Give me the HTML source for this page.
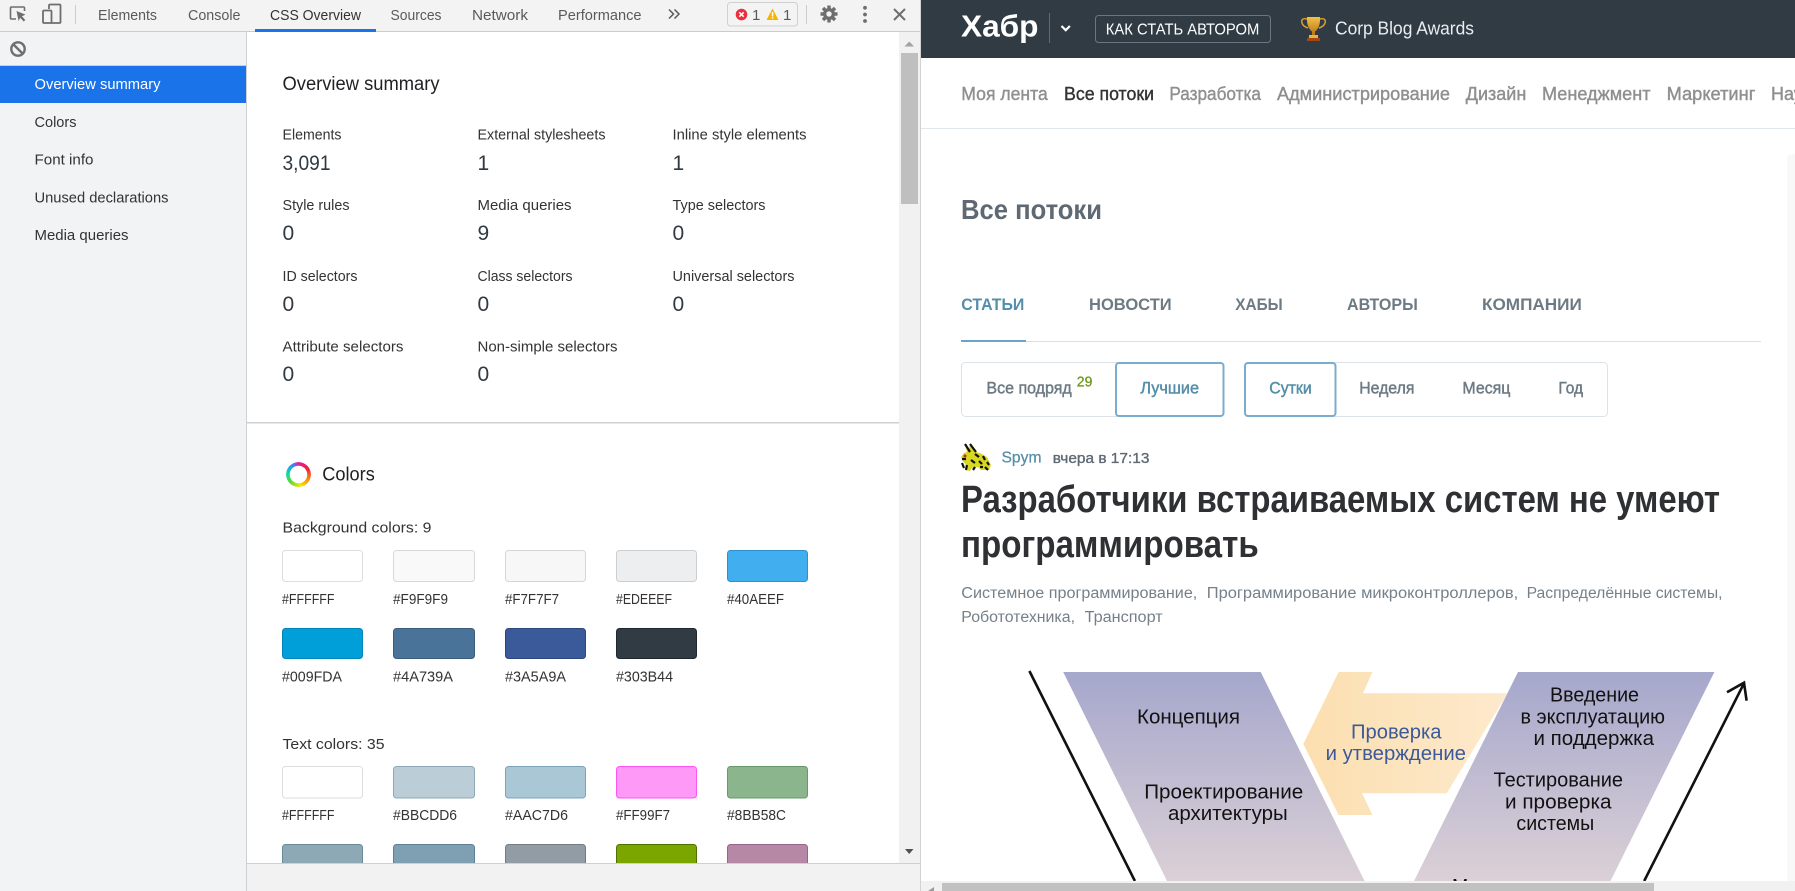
<!DOCTYPE html>
<html lang="ru"><head><meta charset="utf-8"><title>CSS Overview</title>
<style>
html,body{margin:0;padding:0;width:1795px;height:891px;overflow:hidden;background:#fff}
svg{position:absolute;left:0;top:0;display:block}
text{font-family:"Liberation Sans",Arial,sans-serif}
.tab{font-size:15px;fill:#5a5a5a}
.side{font-size:15px;fill:#333}
.lab{font-size:15px;fill:#333}
.val{font-size:21px;fill:#303942}
.h{font-size:19px;fill:#202124}
.hex{font-size:15px;fill:#333}
.nav{font-size:18.5px;fill:#8f8f8f;stroke:#8f8f8f;stroke-width:.4}
.tb{font-size:16.5px;font-weight:bold;fill:#6c7a84}
.fl{font-size:17px;fill:#6c7a84;stroke:#6c7a84;stroke-width:.45}
.hub{font-size:15.500px;fill:#75808a}
.d{font-size:20.500px;fill:#111}
#ring{position:absolute;left:286px;top:461.5px;width:25px;height:25px;border-radius:50%;
background:conic-gradient(#e81f8f 0deg,#f0203a 60deg,#f98a10 115deg,#f5e800 170deg,#5fdd25 225deg,#10d8a0 275deg,#1ea0f0 320deg,#8a4fe0 345deg,#e81f8f 360deg);
-webkit-mask:radial-gradient(circle,transparent 8.5px,#000 9px);mask:radial-gradient(circle,transparent 8.5px,#000 9px)}
</style></head><body>
<svg width="1795" height="891" viewBox="0 0 1795 891" xmlns="http://www.w3.org/2000/svg">
<defs>
<linearGradient id="pg" x1="0" y1="0" x2="0" y2="1"><stop offset="0" stop-color="#a5a7cc"/><stop offset="1" stop-color="#dbd0d6"/></linearGradient>
<linearGradient id="ar" x1="0" y1="0" x2="1" y2="0"><stop offset="0" stop-color="#fcdfb0"/><stop offset="1" stop-color="#fde9cc"/></linearGradient>
<linearGradient id="gold" x1="0" y1="0" x2="0" y2="1"><stop offset="0" stop-color="#f2c14a"/><stop offset="1" stop-color="#b8740f"/></linearGradient>
<clipPath id="pageclip"><rect x="921" y="0" width="874" height="881"/></clipPath>
<clipPath id="devclip"><rect x="247" y="32" width="652" height="831"/></clipPath>
</defs>

<!-- DevTools toolbar -->
<rect x="0" y="0" width="920" height="31" fill="#f3f3f3"/>
<rect x="0" y="31" width="920" height="1" fill="#cbcbcb"/>
<g fill="none" stroke="#6e6e6e" stroke-width="1.6">
<path d="M16 19h-4.5a1 1 0 0 1-1-1V8a1 1 0 0 1 1-1h12a1 1 0 0 1 1 1v3"/>
</g>
<path d="M16.5 11l9 3.6-3.6 1.6 3.4 3.8-1.6 1.500-3.5-3.8-1.6 3.3z" fill="#6e6e6e"/>
<g fill="none" stroke="#6e6e6e" stroke-width="1.8">
<path d="M49 9V5.500a1 1 0 0 1 1-1h9.500a1 1 0 0 1 1 1v16.500a1 1 0 0 1-1 1H44a1 1 0 0 1-1-1V11.500a1 1 0 0 1 1-1h6.500a1 1 0 0 1 1 1V23"/>
</g>
<rect x="75" y="5" width="1" height="19" fill="#ccc"/>
<text class="tab" x="98" y="20" textLength="59" lengthAdjust="spacingAndGlyphs">Elements</text>
<text class="tab" x="188" y="20" textLength="52.500" lengthAdjust="spacingAndGlyphs">Console</text>
<text class="tab" x="270" y="20" textLength="91" lengthAdjust="spacingAndGlyphs" style="fill:#333">CSS Overview</text>
<rect x="255" y="29" width="121" height="3" fill="#1a73e8"/>
<text class="tab" x="390.500" y="20" textLength="51" lengthAdjust="spacingAndGlyphs">Sources</text>
<text class="tab" x="472" y="20" textLength="56" lengthAdjust="spacingAndGlyphs">Network</text>
<text class="tab" x="558" y="20" textLength="83.500" lengthAdjust="spacingAndGlyphs">Performance</text>
<path d="M669 9.500l4.500 4.500-4.500 4.500M674.500 9.500l4.500 4.500-4.500 4.500" fill="none" stroke="#5a5a5a" stroke-width="1.500"/>
<rect x="727.500" y="2.500" width="70" height="23.500" rx="3" fill="#f3f3f3" stroke="#d0d0d0"/>
<circle cx="741.500" cy="14.500" r="5.800" fill="#e9303f"/>
<path d="M739.300 12.300l4.400 4.400M743.700 12.300l-4.400 4.400" stroke="#fff" stroke-width="1.500"/>
<text x="752" y="20" font-size="15" fill="#5a5a5a">1</text>
<path d="M772.500 8.500l6 11.500h-12z" fill="#f4b400"/><rect x="771.800" y="12" width="1.500" height="4.500" fill="#fff"/><rect x="771.800" y="17.200" width="1.500" height="1.500" fill="#fff"/>
<text x="783" y="20" font-size="15" fill="#5a5a5a">1</text>
<rect x="806" y="5" width="1" height="19" fill="#ccc"/>
<g fill="#6e6e6e"><circle cx="829" cy="14" r="6"/>
<g stroke="#6e6e6e" stroke-width="3.400"><path d="M829 5.500v17M820.500 14h17M823 8l12 12M835 8l-12 12"/></g></g>
<circle cx="829" cy="14" r="2.700" fill="#f3f3f3"/>
<circle cx="865" cy="7.800" r="1.900" fill="#6e6e6e"/><circle cx="865" cy="14.500" r="1.900" fill="#6e6e6e"/><circle cx="865" cy="21" r="1.900" fill="#6e6e6e"/>
<path d="M894 9l11 11M905 9l-11 11" stroke="#6e6e6e" stroke-width="2"/>

<!-- Sidebar -->
<rect x="0" y="32" width="246" height="859" fill="#f2f3f5"/>
<rect x="246" y="32" width="1" height="859" fill="#cfcfcf"/>
<rect x="0" y="65" width="246" height="1" fill="#d0d0d0"/>
<circle cx="18" cy="49" r="6.700" fill="none" stroke="#6e6e6e" stroke-width="2.400"/>
<path d="M13.500 44.500l9 9" stroke="#6e6e6e" stroke-width="2.400"/>
<rect x="0" y="66" width="246" height="37" fill="#1a73e8"/>
<text class="side" x="34.500" y="89" textLength="126" lengthAdjust="spacingAndGlyphs" style="fill:#fff">Overview summary</text>
<text class="side" x="34.500" y="127" textLength="42" lengthAdjust="spacingAndGlyphs">Colors</text>
<text class="side" x="34.500" y="164.500" textLength="59" lengthAdjust="spacingAndGlyphs">Font info</text>
<text class="side" x="34.500" y="202.500" textLength="134" lengthAdjust="spacingAndGlyphs">Unused declarations</text>
<text class="side" x="34.500" y="240" textLength="94" lengthAdjust="spacingAndGlyphs">Media queries</text>

<!-- Main content -->
<rect x="247" y="32" width="652" height="831" fill="#fff"/>
<text class="h" x="282.500" y="90" textLength="157" lengthAdjust="spacingAndGlyphs">Overview summary</text>

<text class="lab" x="282.500" y="139.500" textLength="59" lengthAdjust="spacingAndGlyphs">Elements</text>
<text class="val" x="282.500" y="170" textLength="48" lengthAdjust="spacingAndGlyphs">3,091</text>
<text class="lab" x="477.500" y="139.500" textLength="128" lengthAdjust="spacingAndGlyphs">External stylesheets</text>
<text class="val" x="477.500" y="170">1</text>
<text class="lab" x="672.500" y="139.500" textLength="134" lengthAdjust="spacingAndGlyphs">Inline style elements</text>
<text class="val" x="672.500" y="170">1</text>

<text class="lab" x="282.500" y="210" textLength="67" lengthAdjust="spacingAndGlyphs">Style rules</text>
<text class="val" x="282.500" y="240">0</text>
<text class="lab" x="477.500" y="210" textLength="94" lengthAdjust="spacingAndGlyphs">Media queries</text>
<text class="val" x="477.500" y="240">9</text>
<text class="lab" x="672.500" y="210" textLength="93" lengthAdjust="spacingAndGlyphs">Type selectors</text>
<text class="val" x="672.500" y="240">0</text>

<text class="lab" x="282.500" y="281" textLength="75" lengthAdjust="spacingAndGlyphs">ID selectors</text>
<text class="val" x="282.500" y="311">0</text>
<text class="lab" x="477.500" y="281" textLength="95" lengthAdjust="spacingAndGlyphs">Class selectors</text>
<text class="val" x="477.500" y="311">0</text>
<text class="lab" x="672.500" y="281" textLength="122" lengthAdjust="spacingAndGlyphs">Universal selectors</text>
<text class="val" x="672.500" y="311">0</text>

<text class="lab" x="282.500" y="351.500" textLength="121" lengthAdjust="spacingAndGlyphs">Attribute selectors</text>
<text class="val" x="282.500" y="381">0</text>
<text class="lab" x="477.500" y="351.500" textLength="140" lengthAdjust="spacingAndGlyphs">Non-simple selectors</text>
<text class="val" x="477.500" y="381">0</text>

<rect x="247" y="422" width="652" height="1.500" fill="#d0d0d0"/>
<text class="h" x="322.300" y="480.700" textLength="52.500" lengthAdjust="spacingAndGlyphs">Colors</text>
<text class="lab" x="282.500" y="532.500" textLength="149" lengthAdjust="spacingAndGlyphs">Background colors: 9</text>

<g stroke-width="1">
<rect x="282.500" y="550.500" width="80" height="31" rx="3" fill="#FFFFFF" stroke="#ddd"/>
<rect x="393.500" y="550.500" width="81" height="31" rx="3" fill="#F9F9F9" stroke="#d8d8d8"/>
<rect x="505.500" y="550.500" width="80" height="31" rx="3" fill="#F7F7F7" stroke="#d6d6d6"/>
<rect x="616.500" y="550.500" width="80" height="31" rx="3" fill="#EDEEEF" stroke="#cdcecf"/>
<rect x="727.500" y="550.500" width="80" height="31" rx="3" fill="#40AEEF" stroke="#2f90cc"/>
<rect x="282.500" y="628.500" width="80" height="30" rx="3" fill="#009FDA" stroke="#0085b8"/>
<rect x="393.500" y="628.500" width="81" height="30" rx="3" fill="#4A739A" stroke="#3c5e7e"/>
<rect x="505.500" y="628.500" width="80" height="30" rx="3" fill="#3A5A9A" stroke="#2c477d"/>
<rect x="616.500" y="628.500" width="80" height="30" rx="3" fill="#303B44" stroke="#20282f"/>
</g>
<text class="hex" x="282" y="604" textLength="52.500" lengthAdjust="spacingAndGlyphs">#FFFFFF</text>
<text class="hex" x="393" y="604" textLength="55" lengthAdjust="spacingAndGlyphs">#F9F9F9</text>
<text class="hex" x="505" y="604" textLength="54" lengthAdjust="spacingAndGlyphs">#F7F7F7</text>
<text class="hex" x="616" y="604" textLength="56" lengthAdjust="spacingAndGlyphs">#EDEEEF</text>
<text class="hex" x="727" y="604" textLength="57" lengthAdjust="spacingAndGlyphs">#40AEEF</text>
<text class="hex" x="282" y="681.700" textLength="60" lengthAdjust="spacingAndGlyphs">#009FDA</text>
<text class="hex" x="393" y="681.700" textLength="60" lengthAdjust="spacingAndGlyphs">#4A739A</text>
<text class="hex" x="505" y="681.700" textLength="61" lengthAdjust="spacingAndGlyphs">#3A5A9A</text>
<text class="hex" x="616" y="681.700" textLength="57" lengthAdjust="spacingAndGlyphs">#303B44</text>

<text class="lab" x="282.500" y="749" textLength="102" lengthAdjust="spacingAndGlyphs">Text colors: 35</text>
<rect x="282.500" y="766.500" width="80" height="31.500" rx="3" fill="#FFFFFF" stroke="#ddd"/>
<rect x="393.500" y="766.500" width="81" height="31.500" rx="3" fill="#BBCDD6" stroke="#8fa8b5"/>
<rect x="505.500" y="766.500" width="80" height="31.500" rx="3" fill="#AAC7D6" stroke="#7ba4ba"/>
<rect x="616.500" y="766.500" width="80" height="31.500" rx="3" fill="#FF99F7" stroke="#ff55f0"/>
<rect x="727.500" y="766.500" width="80" height="31.500" rx="3" fill="#8BB58C" stroke="#679a68"/>
<text class="hex" x="282" y="820" textLength="52.500" lengthAdjust="spacingAndGlyphs">#FFFFFF</text>
<text class="hex" x="393" y="820" textLength="64" lengthAdjust="spacingAndGlyphs">#BBCDD6</text>
<text class="hex" x="505" y="820" textLength="63" lengthAdjust="spacingAndGlyphs">#AAC7D6</text>
<text class="hex" x="616" y="820" textLength="54" lengthAdjust="spacingAndGlyphs">#FF99F7</text>
<text class="hex" x="727" y="820" textLength="59" lengthAdjust="spacingAndGlyphs">#8BB58C</text>
<g clip-path="url(#devclip)">
<rect x="282.500" y="844.500" width="80" height="32" rx="3" fill="#8DA9B5" stroke="#6a8a98"/>
<rect x="393.500" y="844.500" width="81" height="32" rx="3" fill="#7FA0B2" stroke="#5e8094"/>
<rect x="505.500" y="844.500" width="80" height="32" rx="3" fill="#929CA5" stroke="#717c86"/>
<rect x="616.500" y="844.500" width="80" height="32" rx="3" fill="#7BA600" stroke="#507000"/>
<rect x="727.500" y="844.500" width="80" height="32" rx="3" fill="#B688A6" stroke="#96658a"/>
</g>

<!-- dev scrollbar -->
<rect x="899" y="32" width="21" height="831" fill="#f1f1f1"/>
<rect x="901" y="53" width="17" height="151" fill="#bfbfbf"/>
<path d="M904.500 46.500h9.500l-4.750-5z" fill="#a3a3a3"/>
<path d="M905 849h8.500l-4.250 5z" fill="#505050"/>
<rect x="247" y="863" width="673" height="28" fill="#f2f2f2"/>
<rect x="247" y="863" width="673" height="1" fill="#d0d0d0"/>
<rect x="920" y="0" width="1" height="891" fill="#d2d2d2"/>

<!-- Habr page -->
<g clip-path="url(#pageclip)">
<rect x="921" y="0" width="874" height="58" fill="#303B44"/>
<text x="961" y="36.500" font-size="31" font-weight="bold" fill="#fff" textLength="77.500" lengthAdjust="spacingAndGlyphs">Хабр</text>
<rect x="1049" y="13" width="1" height="30" fill="#5f6b75"/>
<path d="M1061.500 26l4.200 4.200 4.200-4.200" fill="none" stroke="#fff" stroke-width="2.200"/>
<rect x="1095.500" y="15.500" width="175" height="27" rx="3" fill="none" stroke="#6b7680"/>
<text x="1105.800" y="34.500" font-size="16" fill="#fff" textLength="153.500" lengthAdjust="spacingAndGlyphs">КАК СТАТЬ АВТОРОМ</text>
<path d="M1307 17h13c.5 7-1.500 12-5 14.500v3.500h-3v-3.500c-3.500-2.500-5.500-7.500-5-14.500z" fill="url(#gold)"/>
<path d="M1307 19c-4-1-6 .5-5 4 .7 2.500 3 4 6 5M1320 19c4-1 6 .5 5 4-.7 2.500-3 4-6 5" fill="none" stroke="#d9a02e" stroke-width="1.500"/>
<rect x="1309" y="35" width="9" height="3" fill="#e8b24a"/><rect x="1307" y="38" width="13" height="3" fill="#a3460f"/>
<text x="1335" y="34.500" font-size="18.500" fill="#e9edf0" textLength="139" lengthAdjust="spacingAndGlyphs">Corp Blog Awards</text>

<text class="nav" x="961.300" y="100" textLength="86.500" lengthAdjust="spacingAndGlyphs">Моя лента</text>
<text class="nav" x="1064" y="100" textLength="90" lengthAdjust="spacingAndGlyphs" style="fill:#333;stroke:#333">Все потоки</text>
<text class="nav" x="1169.400" y="100" textLength="91.500" lengthAdjust="spacingAndGlyphs">Разработка</text>
<text class="nav" x="1277" y="100" textLength="173" lengthAdjust="spacingAndGlyphs">Администрирование</text>
<text class="nav" x="1465.800" y="100" textLength="60.500" lengthAdjust="spacingAndGlyphs">Дизайн</text>
<text class="nav" x="1542" y="100" textLength="108.500" lengthAdjust="spacingAndGlyphs">Менеджмент</text>
<text class="nav" x="1666.600" y="100" textLength="88.800" lengthAdjust="spacingAndGlyphs">Маркетинг</text>
<text class="nav" x="1771" y="100" textLength="50" lengthAdjust="spacingAndGlyphs">Наука</text>
<rect x="921" y="128" width="874" height="1" fill="#e0e7ec"/>

<path d="M1795 154h-4a4 4 0 0 0-4 4v733h8z" fill="#f8f8f8"/>

<text x="961" y="219" font-size="28" font-weight="bold" fill="#5e6973" textLength="141" lengthAdjust="spacingAndGlyphs">Все потоки</text>

<text class="tb" x="961.300" y="310" textLength="63" lengthAdjust="spacingAndGlyphs" style="fill:#548eaa">СТАТЬИ</text>
<text class="tb" x="1089" y="310" textLength="82.700" lengthAdjust="spacingAndGlyphs">НОВОСТИ</text>
<text class="tb" x="1235.300" y="310" textLength="47.400" lengthAdjust="spacingAndGlyphs">ХАБЫ</text>
<text class="tb" x="1347" y="310" textLength="70.800" lengthAdjust="spacingAndGlyphs">АВТОРЫ</text>
<text class="tb" x="1482" y="310" textLength="99.800" lengthAdjust="spacingAndGlyphs">КОМПАНИИ</text>
<rect x="961" y="341" width="800" height="1" fill="#d5dfe6"/>
<rect x="961" y="340" width="65" height="2" fill="#6ba3c9"/>

<rect x="961.500" y="362.500" width="262" height="54" rx="4" fill="#fff" stroke="#dbe3e8"/>
<rect x="1244.500" y="362.500" width="363" height="54" rx="4" fill="#fff" stroke="#dbe3e8"/>
<rect x="1116" y="363" width="107.500" height="53" rx="3" fill="#fff" stroke="#7aaccd" stroke-width="2"/>
<rect x="1245" y="363" width="90.500" height="53" rx="3" fill="#fff" stroke="#7aaccd" stroke-width="2"/>
<text class="fl" x="986.400" y="393.500" textLength="85.400" lengthAdjust="spacingAndGlyphs">Все подряд</text>
<text x="1076.800" y="386.700" font-size="14.500" fill="#6d9a1b" stroke="#6d9a1b" stroke-width=".3" textLength="15.600" lengthAdjust="spacingAndGlyphs">29</text>
<text class="fl" x="1140.400" y="393.500" textLength="58.600" lengthAdjust="spacingAndGlyphs" style="fill:#548eaa;stroke:#548eaa">Лучшие</text>
<text class="fl" x="1269.300" y="393.500" textLength="42.400" lengthAdjust="spacingAndGlyphs" style="fill:#548eaa;stroke:#548eaa">Сутки</text>
<text class="fl" x="1359.200" y="393.500" textLength="55.200" lengthAdjust="spacingAndGlyphs">Неделя</text>
<text class="fl" x="1462.400" y="393.500" textLength="48" lengthAdjust="spacingAndGlyphs">Месяц</text>
<text class="fl" x="1558.400" y="393.500" textLength="24.600" lengthAdjust="spacingAndGlyphs">Год</text>

<!-- avatar -->
<g>
<path d="M965 444l4 6 1-6 6 8 4 1 7 4 4 8-2 5h-8l-3-3-6 1-2 3-5-1 1-5-3-4-2-4 3-4 3-1z" fill="#d8d820"/>
<path d="M965 444l5 8M970 444l6 8M962 459h4M975 454l4 3M983 456l2 4M971 460l4 3M979 461l3 3M987 462l2 3M967 465l-1 5M975 467l-2 3M985 467l3 3M962 463l2 5M980 467h3" stroke="#111" stroke-width="2.200"/>
<circle cx="965" cy="456" r="1.500" fill="#b03030"/>
</g>
<text x="1001.500" y="462.700" font-size="16" fill="#548eaa" stroke="#548eaa" stroke-width=".25" textLength="40" lengthAdjust="spacingAndGlyphs">Spym</text>
<text x="1052.800" y="463" font-size="15" fill="#5e6973" stroke="#5e6973" stroke-width=".35" textLength="96.600" lengthAdjust="spacingAndGlyphs">вчера в 17:13</text>

<text x="961" y="512" font-size="38" font-weight="bold" fill="#2f3033" textLength="759" lengthAdjust="spacingAndGlyphs">Разработчики встраиваемых систем не умеют</text>
<text x="961" y="557" font-size="38" font-weight="bold" fill="#2f3033" textLength="297.700" lengthAdjust="spacingAndGlyphs">программировать</text>

<text class="hub" x="961.300" y="598" textLength="236" lengthAdjust="spacingAndGlyphs">Системное программирование,</text>
<text class="hub" x="1206.800" y="598" textLength="311.400" lengthAdjust="spacingAndGlyphs">Программирование микроконтроллеров,</text>
<text class="hub" x="1526.600" y="598" textLength="195.900" lengthAdjust="spacingAndGlyphs">Распределённые системы,</text>
<text class="hub" x="961.300" y="622" textLength="113.700" lengthAdjust="spacingAndGlyphs">Робототехника,</text>
<text class="hub" x="1084.600" y="622" textLength="78.100" lengthAdjust="spacingAndGlyphs">Транспорт</text>

<!-- diagram -->
<path d="M1338.600 672h33.800l-9.400 21.300h144.500l-60.800 100h-84.700l10.400 21.700h-33.800l-35.300-71z" fill="url(#ar)"/>
<path d="M1063.200 672h197.500l103.900 209h-197.600z" fill="url(#pg)"/>
<path d="M1518 672h196.400l-103.900 209h-196.500z" fill="url(#pg)"/>
<path d="M1029.400 671l105.500 210" stroke="#111" stroke-width="2.600" fill="none"/>
<path d="M1644.200 881l99.800-197.700M1727 692.300l17-9.600 2.600 18" stroke="#111" stroke-width="2.600" fill="none"/>
<text class="d" x="1137" y="723.300" textLength="103" lengthAdjust="spacingAndGlyphs">Концепция</text>
<text class="d" x="1144.200" y="798.300" textLength="159" lengthAdjust="spacingAndGlyphs">Проектирование</text>
<text class="d" x="1168" y="820" textLength="119.700" lengthAdjust="spacingAndGlyphs">архитектуры</text>
<text class="d" x="1550" y="701.700" textLength="89" lengthAdjust="spacingAndGlyphs">Введение</text>
<text class="d" x="1520.500" y="723.300" textLength="144.500" lengthAdjust="spacingAndGlyphs">в эксплуатацию</text>
<text class="d" x="1533.500" y="745" textLength="120.500" lengthAdjust="spacingAndGlyphs">и поддержка</text>
<text class="d" x="1351" y="738.300" textLength="90.500" lengthAdjust="spacingAndGlyphs" style="fill:#3a5a9a">Проверка</text>
<text class="d" x="1325.600" y="760" textLength="140.400" lengthAdjust="spacingAndGlyphs" style="fill:#3a5a9a">и утверждение</text>
<text class="d" x="1493.500" y="786.700" textLength="129.500" lengthAdjust="spacingAndGlyphs">Тестирование</text>
<text class="d" x="1505" y="808.300" textLength="106.500" lengthAdjust="spacingAndGlyphs">и проверка</text>
<text class="d" x="1516.400" y="830" textLength="77.900" lengthAdjust="spacingAndGlyphs">системы</text>
<text class="d" x="1452" y="893" textLength="102" lengthAdjust="spacingAndGlyphs">Модульное</text>
</g>

<!-- page scrollbar -->
<rect x="921" y="881" width="874" height="10" fill="#f1f1f1"/>
<rect x="942" y="883" width="712" height="8" fill="#c1c1c1"/>
<path d="M934 887v4h-6z" fill="#9a9a9a"/>
</svg>
<div id="ring"></div>
</body></html>
